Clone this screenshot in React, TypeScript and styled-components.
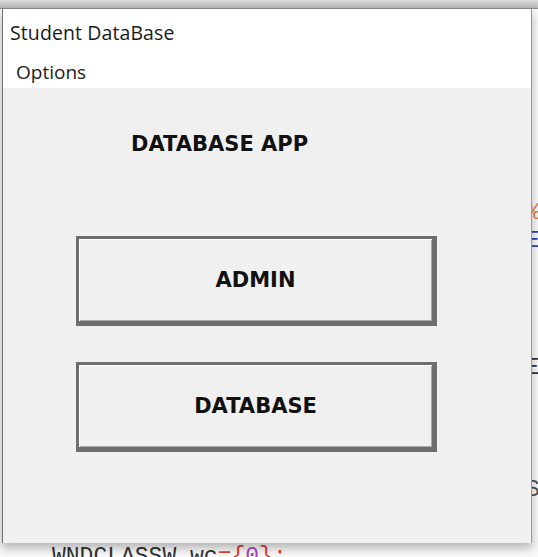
import React from "react";
import styled, { createGlobalStyle } from "styled-components";

const Global = createGlobalStyle`
  html, body { margin: 0; padding: 0; }
  body { background: #f7f7f7; width: 538px; height: 557px; overflow: hidden; }
`;

const Stage = styled.div`
  position: relative;
  width: 538px;
  height: 557px;
  overflow: hidden;
  background: #f8f8f8;
`;

const Editor = styled.div`
  display: flex;
  flex-direction: column;
  font-family: "Liberation Mono", "DejaVu Sans Mono", monospace;
  font-size: 23px;
  line-height: 16px;
`;

const EditorBar = styled.div`
  height: 8px;
  background: linear-gradient(#dcdcdc, #b5b5b5);
  border-bottom: 1px solid #8a8a8a;
`;

const CodeLine = styled.div<{ $gap: number; $indent: number }>`
  margin-top: ${(p) => p.$gap}px;
  padding-left: ${(p) => p.$indent}px;
  height: 16px;
  white-space: pre;
  color: #333;
`;

const Tok = styled.span<{ $c: string }>`
  color: ${(p) => p.$c};
`;

const Window = styled.div`
  position: absolute;
  left: 2px;
  top: 9px;
  width: 528px;
  height: 534px;
  display: flex;
  flex-direction: column;
  border-left: 1px solid #707070;
  border-right: 1px solid #9a9a9a;
  box-shadow: 0 5px 9px rgba(0, 0, 0, 0.28);
  font-family: "Open Sans", "Noto Sans", sans-serif;
`;

const TitleBar = styled.div`
  height: 46px;
  background: #ffffff;
  display: flex;
  align-items: center;
  padding-left: 7px;
  font-size: 19.5px;
  color: #1a1a1a;
  letter-spacing: 0.1px;
`;

const MenuBar = styled.div`
  height: 33px;
  background: #ffffff;
  display: flex;
  align-items: center;
  padding-left: 13px;
  font-size: 19px;
  color: #222;
`;

const Client = styled.div`
  flex: 1;
  background: #f0f0f0;
  display: flex;
  flex-direction: column;
  padding: 44px 0 0 73px;
`;

const Heading = styled.div`
  font-family: "DejaVu Sans", sans-serif;
  font-weight: bold;
  font-size: 21px;
  line-height: 24px;
  color: #111;
  margin-left: 55px;
  margin-bottom: 80px;
`;

const Buttons = styled.div`
  display: flex;
  flex-direction: column;
  gap: 36px;
`;

const Button = styled.button`
  box-sizing: border-box;
  width: 361px;
  height: 90px;
  background: #f0f0f0;
  border-style: solid;
  border-color: #6e6e6e;
  border-width: 3px 5px 5px 3px;
  box-shadow: inset 1px 1px 0 #ffffff, inset -1px -1px 0 #a8a8a8;
  padding: 0;
  margin: 0;
  font-family: "DejaVu Sans", sans-serif;
  font-weight: bold;
  font-size: 21px;
  color: #111;
  display: flex;
  align-items: center;
  justify-content: center;
  cursor: default;
`;

export default function App() {
  return (
    <>
      <Global />
      <Stage>
        <Editor>
          <EditorBar />
          <CodeLine $gap={196} $indent={526}>
            <Tok $c="#e07a3a">%</Tok>
          </CodeLine>
          <CodeLine $gap={12} $indent={526}>
            <Tok $c="#2b3fb8">E</Tok>
          </CodeLine>
          <CodeLine $gap={111} $indent={526}>
            <Tok $c="#333">Ξ</Tok>
          </CodeLine>
          <CodeLine $gap={46} $indent={0}>
            <Tok $c="#e07a3a">{" )"}</Tok>
          </CodeLine>
          <CodeLine $gap={42} $indent={0}>
            <Tok $c="#3a3f6e">{" d"}</Tok>
          </CodeLine>
          <CodeLine $gap={-14} $indent={526}>
            <Tok $c="#555">S</Tok>
          </CodeLine>
          <CodeLine $gap={12} $indent={0}>
            <Tok $c="#e07a3a">{" )"}</Tok>
          </CodeLine>
          <CodeLine $gap={23} $indent={52}>
            WNDCLASSW wc<Tok $c="#e0403a">={"{"}</Tok>
            <Tok $c="#b040c0">0</Tok>
            <Tok $c="#e0403a">{"};"}</Tok>
          </CodeLine>
        </Editor>
        <Window>
          <TitleBar>Student DataBase</TitleBar>
          <MenuBar>Options</MenuBar>
          <Client>
            <Heading>DATABASE APP</Heading>
            <Buttons>
              <Button>ADMIN</Button>
              <Button>DATABASE</Button>
            </Buttons>
          </Client>
        </Window>
      </Stage>
    </>
  );
}
